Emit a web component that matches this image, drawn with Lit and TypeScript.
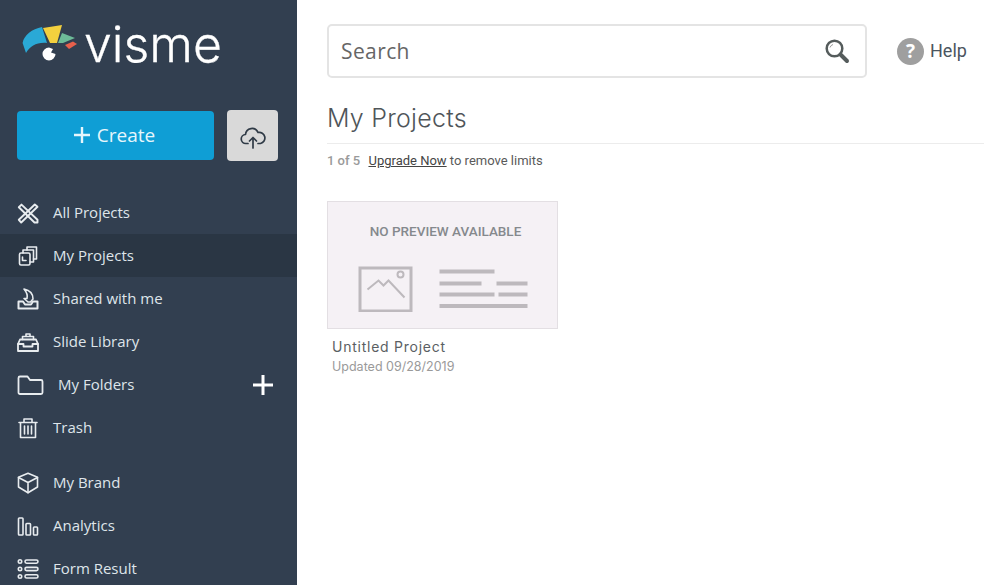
import { LitElement, html, css, svg } from "lit";
import { customElement } from "lit/decorators.js";

const s = (inner: unknown, w = 24, h = 24, vb = "0 0 24 24") => html`<svg class="ic" width=${w} height=${h} viewBox=${vb} fill="none" stroke="currentColor" stroke-width="1.6" stroke-linecap="round" stroke-linejoin="round">${inner}</svg>`;

const icons: Record<string, unknown> = {
  all: s(svg`<path d="M1.800 6.200 4.500 3.600 20.500 18.800V21.500H17.500Z" stroke-width="1.900"/><path d="M20.500 5.800 17.800 3.500 1.800 18.800 4.200 21.500Z" stroke-width="1.900"/>`),
  my: s(svg`<path d="M6 9V6H16.500V18H13"/><path d="M10 6V3H19.500V15H16.500"/><rect x="2.500" y="9" width="10.500" height="12" rx="1.500"/><path d="M5.500 13v3.500H9"/>`),
  shared: s(svg`<path d="M1.500 21.500V14.500H6L8 17.500H14L16 14.500H20.500V21.500Z" stroke-width="2"/><path d="M7 2C12 3 16 6 16 12L13.500 15H11L7 11.500H10C11 8 9.500 5 7 2Z"/>`),
  lib: s(svg`<path d="M3 9.500H19L21 14V21H1V14Z" stroke-width="1.800"/><path d="M1 14H6.500V16.500H15.500V14H21" stroke-width="1.800"/><path d="M5.500 9.500V6.500H16.500V9.500M9 6.500V4H13V6.500"/>`),
  folder: s(svg`<path d="M1.500 19.500V5A1.500 1.500 0 0 1 3 3.500H10.500L13 7H24A1.500 1.500 0 0 1 25.500 8.500V19.500A1.500 1.500 0 0 1 24 21H3A1.500 1.500 0 0 1 1.500 19.500Z" stroke-width="1.800"/>`, 27, 24, "0 0 27 24"),
  trash: s(svg`<path d="M2 6.500H20M7 6.500V3H15V6.500M3.500 6.500V21.500H18.500V6.500M7.500 10V18M11 10V18M14.500 10V18"/>`),
  brand: s(svg`<path d="M11 2.200 20.500 6.200V16L11 21.800 1.500 16V6.200Z"/><path d="M1.500 6.500 11 11.500 20.500 6.500M11 11.500V21.800"/>`),
  analytics: s(svg`<rect x="1.500" y="4" width="4.500" height="17" rx="0.800"/><rect x="9" y="9.500" width="4.500" height="11.500" rx="0.800"/><rect x="16.500" y="13" width="4" height="8" rx="0.800"/>`),
  form: s(svg`<circle cx="3" cy="4.500" r="1.700"/><circle cx="3" cy="12" r="1.700"/><circle cx="3" cy="19.500" r="1.700"/><rect x="8" y="3" width="13" height="3.200" rx="1.600"/><rect x="8" y="10.400" width="13" height="3.200" rx="1.600"/><rect x="8" y="17.800" width="13" height="3.200" rx="1.600"/>`),
};

type Item = { k: string; label: string; active?: boolean; folder?: boolean; gap?: boolean };
const items: Item[] = [
  { k: "all", label: "All Projects" },
  { k: "my", label: "My Projects", active: true },
  { k: "shared", label: "Shared with me" },
  { k: "lib", label: "Slide Library" },
  { k: "folder", label: "My Folders", folder: true },
  { k: "trash", label: "Trash" },
  { k: "brand", label: "My Brand", gap: true },
  { k: "analytics", label: "Analytics" },
  { k: "form", label: "Form Result" },
];

@customElement("app-root")
export class AppRoot extends LitElement {
  static styles = css`
    :host { display: block; height: 585px; overflow: hidden; background: #fff; }
    .page { display: flex; height: 585px; overflow: hidden; }
    .side { width: 297px; flex: none; background: #323f50; color: #fff; overflow: hidden; }
    .logo { display: flex; align-items: center; height: 110px; padding: 0 0 22px 22px; box-sizing: border-box; gap: 6px; }
    .logo-mark { margin-top: -2px; }
    .logo-text { font: 300 50px/1 Inter, sans-serif; color: #fff; letter-spacing: 0; -webkit-text-stroke: 0.3px #fff; }
    .actions { display: flex; align-items: center; gap: 13px; padding-left: 17px; height: 51px; }
    .create { width: 197px; height: 49px; background: #0f9ed5; border-radius: 4px; display: flex; align-items: center; justify-content: center; gap: 7px; font: 500 19px "Open Sans", sans-serif; color: #e6f6fc; padding: 0 2px 2px 0; box-sizing: border-box; }
    .upload { width: 51px; height: 51px; background: #d9d9d9; border-radius: 4px; display: flex; align-items: center; justify-content: center; color: #2f3a46; padding-top: 4px; box-sizing: border-box; }
    .menu { padding-top: 30px; }
    .row { height: 43px; display: flex; align-items: center; padding-left: 17px; gap: 12px; font: 400 15px "Open Sans", sans-serif; color: #dfe5ea; box-sizing: border-box; }
    .row-label { padding-bottom: 2px; }
    .row.active { background: #2a3644; }
    .row.gap { margin-top: 12px; }
    .row.folder { gap: 14px; }
    .row .ic { flex: none; color: #e8ecef; }
    .plus { margin-left: auto; margin-right: 24px; width: 20px; height: 20px; display: flex; color: #fff; }
    .main { flex: 1; min-width: 0; padding: 24px 0 0 30px; }
    .top { display: flex; align-items: center; }
    .search { width: 540px; height: 54px; box-sizing: border-box; border: 2px solid #e4e4e4; border-radius: 5px; display: flex; align-items: center; justify-content: space-between; padding: 0 15px 0 12px; font: 400 21px "Open Sans", sans-serif; color: #666; letter-spacing: 0.4px; }
    .help { display: flex; align-items: center; margin-left: 30px; gap: 6px; font: 400 18px Roboto, sans-serif; color: #4b5560; }
    .help-label { padding-bottom: 2px; }
    .q { width: 27px; height: 27px; border-radius: 50%; background: #9f9f9f; color: #fff; display: flex; align-items: center; justify-content: center; font: 700 19px "Open Sans", sans-serif; }
    h1 { margin: 24px 0 0; height: 42px; box-sizing: border-box; border-bottom: 1px solid #ececec; font: 300 25px/32px Inter, sans-serif; color: #4f5559; letter-spacing: 0.25px; }
    .limits { margin-top: 9px; font: 400 13px/16px Roboto, sans-serif; color: #5a5a5a; }
    .limits b { color: #9a9a9a; font-weight: 500; margin-right: 5px; }
    .limits u { color: #444; }
    .card { margin-top: 32px; width: 231px; }
    .thumb { height: 128px; box-sizing: border-box; background: #f5f1f5; border: 1px solid #e3dfe3; display: flex; flex-direction: column; align-items: center; }
    .np { margin: 21px 0 0 6px; font: 500 13.500px/16px Roboto, sans-serif; color: #85898d; }
    .art { margin-top: 27px; color: #bdb9bd; }
    .name { margin: 9px 0 0 5px; font: 400 14px/18px Inter, sans-serif; color: #5b5f63; letter-spacing: 0.75px; }
    .date { margin: 3px 0 0 5px; font: 400 12.500px/16px Inter, sans-serif; color: #9a9a9a; }
  `;

  render() {
    return html`<div class="page">
      <aside class="side">
        <div class="logo">
          <svg class="logo-mark" width="56" height="36" viewBox="0 0 56 36">
            <path d="M0.600 18C2 10 10 4 20 2L25 18C15 17 8 21 4 28Z" fill="#2aa9d6"/>
            <path d="M21 3 40 0 35 18H28Z" fill="#f3d03e"/>
            <path d="M40 8 53 13 41 18H36Z" fill="#6dbb98"/>
            <path d="M43 20 51 16.500 55 19 47 24Z" fill="#e8604c"/>
            <path d="M27 22.500A6.500 6.500 0 1 0 33.500 29L29 27.500 31 24Z" fill="#fff"/>
          </svg>
          <span class="logo-text">visme</span>
        </div>
        <div class="actions">
          <div class="create">
            <svg width="16" height="16" viewBox="0 0 16 16"><path d="M8 0v16M0 8h16" stroke="#e6f6fc" stroke-width="2.400"/></svg>
            Create
          </div>
          <div class="upload">
            <svg width="26" height="22" viewBox="0 0 26 22" fill="none" stroke="currentColor" stroke-width="1.700" stroke-linecap="round" stroke-linejoin="round">
              <path d="M8 16.500H6a4.500 4.500 0 0 1-.5-9A6.500 6.500 0 0 1 18 5.500a5.500 5.500 0 0 1 2.500 11H18"/>
              <path d="M13 21V11M9.500 14 13 10.500 16.500 14"/>
            </svg>
          </div>
        </div>
        <nav class="menu">
          ${items.map((i) => html`<div class="row ${i.active ? "active" : ""} ${i.gap ? "gap" : ""} ${i.folder ? "folder" : ""}">
            ${icons[i.k]}<span class="row-label">${i.label}</span>
            ${i.folder ? html`<span class="plus"><svg width="20" height="20" viewBox="0 0 20 20"><path d="M10 0v20M0 10h20" stroke="currentColor" stroke-width="3"/></svg></span>` : ""}
          </div>`)}
        </nav>
      </aside>
      <main class="main">
        <div class="top">
          <div class="search">
            <span>Search</span>
            <svg width="25" height="25" viewBox="0 0 25 25" fill="none" stroke="#555c5c">
              <circle cx="9.500" cy="9.500" r="7.800" stroke-width="2.500"/>
              <path d="M15.500 15.500l6.500 6.500" stroke-width="4" stroke-linecap="round"/>
              <path d="M5 8.500a4.500 4.500 0 0 1 3-3" stroke-width="1" stroke="#999"/>
            </svg>
          </div>
          <div class="help"><span class="q">?</span><span class="help-label">Help</span></div>
        </div>
        <h1>My Projects</h1>
        <div class="limits"><b>1 of 5</b> <u>Upgrade Now</u> to remove limits</div>
        <div class="card">
          <div class="thumb">
            <div class="np">NO PREVIEW AVAILABLE</div>
            <svg class="art" width="170" height="46" viewBox="0 0 170 46" fill="none" stroke="currentColor">
              <rect x="2" y="2" width="51" height="43" stroke-width="3"/>
              <circle cx="42.500" cy="8.500" r="3" stroke-width="2"/>
              <path d="M9.500 23.500 20.500 14.500 25.500 19.500 30.500 14.500 46.500 31.500" stroke-width="2"/>
              <g stroke-width="4">
                <path d="M81.500 5.500H136.500M81.500 17.500H123.500M138.500 17.500H169.500M81.500 28.500H136.500M140.500 28.500H169.500M81.500 40H169.500"/>
              </g>
            </svg>
          </div>
          <div class="name">Untitled Project</div>
          <div class="date">Updated 09/28/2019</div>
        </div>
      </main>
    </div>`;
  }
}
